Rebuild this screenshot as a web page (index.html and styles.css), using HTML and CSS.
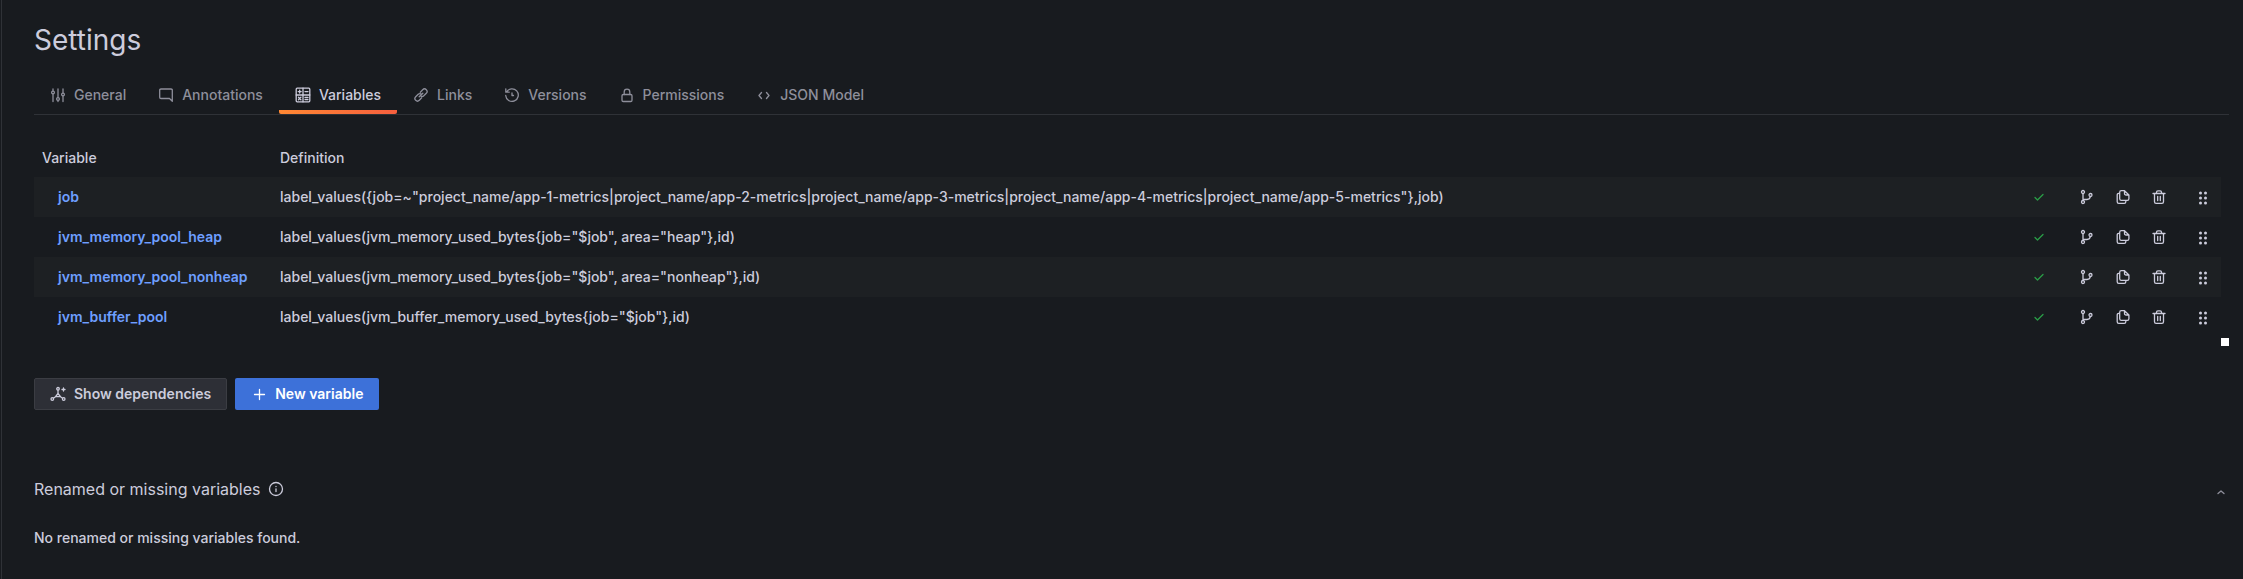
FILE: index.html
```html
<!DOCTYPE html>
<html lang="en">
<head>
    <meta charset="UTF-8">
    <meta name="viewport" content="width=device-width, initial-scale=1.0">
    <title>Settings</title>
    <link rel="stylesheet" href="styles.css">
</head>
<body>
    <!-- shared icons -->
    <svg class="sprite" aria-hidden="true">
        <symbol id="check" viewBox="0 0 16 16"><path d="M4 8.500l2.500 2.500 5.500-5.500"/></symbol>
        <symbol id="branch" viewBox="0 0 16 16">
            <circle cx="4" cy="3" r="1.5"/><circle cx="4" cy="13" r="1.5"/><circle cx="11.5" cy="6" r="1.5"/>
            <path d="M4 4.500v7M4 10.500h4q3 0 3.300-3"/>
        </symbol>
        <symbol id="copy" viewBox="0 0 16 16">
            <path d="M9.500 1.700H6.300q-1.600 0-1.600 1.600v6.400q0 1.600 1.600 1.600h6q1.600 0 1.600-1.600V6zM9.500 1.700v2.700q0 1.600 1.600 1.600h2.800M4.700 4.300H3.800q-1.600 0-1.600 1.600v6.800q0 1.600 1.600 1.600h5.400q1.600 0 1.600-1.600v-1.400"/>
        </symbol>
        <symbol id="trash" viewBox="0 0 16 16">
            <path d="M2 4.500h12M5.500 4.500V3.200q0-1.400 1.400-1.400h2.200q1.400 0 1.400 1.400v1.300M3.500 4.500v8.200q0 1.600 1.600 1.600h5.800q1.600 0 1.600-1.600V4.500M6.700 7.300v4.200M9.300 7.300v4.200"/>
        </symbol>
        <symbol id="drag" viewBox="0 0 16 16">
            <g fill="currentColor" stroke="none">
                <circle cx="5.500" cy="4" r="1.500"/><circle cx="10.500" cy="4" r="1.500"/>
                <circle cx="5.500" cy="9" r="1.500"/><circle cx="10.500" cy="9" r="1.500"/>
                <circle cx="5.500" cy="14" r="1.500"/><circle cx="10.500" cy="14" r="1.500"/>
            </g>
        </symbol>
    </svg>

    <main class="page">
        <h1>Settings</h1>

        <nav class="tabs">
            <a class="tab" href="#general">
                <svg class="icon" viewBox="0 0 16 16"><path d="M3 2v2M3 7v7.500M8 2v8.500M8 13.500v1M13 2v4M13 9v5.500"/><circle cx="3" cy="5.500" r="1.400"/><circle cx="8" cy="12" r="1.400"/><circle cx="13" cy="7.500" r="1.400"/></svg>
                General
            </a>
            <a class="tab" href="#annotations">
                <svg class="icon" viewBox="0 0 16 16"><path d="M14.300 14.300V3.300q0-1.300-1.300-1.300H3q-1.300 0-1.300 1.300v6.900q0 1.300 1.300 1.300h8.500z"/></svg>
                Annotations
            </a>
            <a class="tab active" href="#variables">
                <svg class="icon" viewBox="0 0 16 16"><rect x="1.200" y="1.200" width="13.600" height="13.600" rx="1"/><path d="M8 1.200v13.600M1.200 8h13.600M3.200 4.600h3M4.700 3.100v3M10 4.600h3M3.500 10.300l2.400 2.400M5.900 10.300l-2.400 2.400M10 10.500h3M10 12.600h3"/></svg>
                Variables
            </a>
            <a class="tab" href="#links">
                <svg class="icon" viewBox="0 0 16 16"><path d="M6.200 9.800l3.600-3.600M7.300 5.200l2.400-2.500a2.500 2.500 0 0 1 3.600 3.600L10.800 8.700a2.500 2.500 0 0 1-2.700.5M8.700 10.800l-2.400 2.500a2.500 2.500 0 0 1-3.600-3.600L5.200 7.300a2.500 2.500 0 0 1 2.700-.5"/></svg>
                Links
            </a>
            <a class="tab" href="#versions">
                <svg class="icon" viewBox="0 0 16 16"><path d="M2.500 5A6.300 6.300 0 1 1 1.700 8.500M1.800 1.800v3.400h3.400M8 6v2.500h1.500"/></svg>
                Versions
            </a>
            <a class="tab" href="#permissions">
                <svg class="icon" viewBox="0 0 16 16"><rect x="3" y="7.500" width="10" height="7" rx="1.300"/><path d="M5.200 7.500V5a2.800 2.800 0 0 1 5.600 0v2.500"/></svg>
                Permissions
            </a>
            <a class="tab" href="#json">
                <svg class="icon" viewBox="0 0 16 16"><path d="M5.500 5.500L3 8.500l2.500 3M10.500 5.500L13 8.500l-2.500 3"/></svg>
                JSON Model
            </a>
        </nav>

        <div class="table-wrap">
            <table class="variables">
                <thead>
                    <tr>
                        <th class="col-name">Variable</th>
                        <th>Definition</th>
                        <th class="col-check"></th>
                        <th class="col-actions"></th>
                        <th class="col-drag"></th>
                    </tr>
                </thead>
                <tbody>
                    <tr>
                        <td class="name"><a href="#job">job</a></td>
                        <td>label_values({job=~"project_name/app-1-metrics|project_name/app-2-metrics|project_name/app-3-metrics|project_name/app-4-metrics|project_name/app-5-metrics"},job)</td>
                        <td class="check"><svg class="icon"><use href="#check"/></svg></td>
                        <td>
                            <div class="actions">
                                <button type="button" aria-label="Show usages"><svg class="icon"><use href="#branch"/></svg></button>
                                <button type="button" aria-label="Duplicate variable"><svg class="icon"><use href="#copy"/></svg></button>
                                <button type="button" aria-label="Remove variable"><svg class="icon"><use href="#trash"/></svg></button>
                            </div>
                        </td>
                        <td class="drag"><svg class="icon"><use href="#drag"/></svg></td>
                    </tr>
                    <tr>
                        <td class="name"><a href="#heap">jvm_memory_pool_heap</a></td>
                        <td>label_values(jvm_memory_used_bytes{job="$job", area="heap"},id)</td>
                        <td class="check"><svg class="icon"><use href="#check"/></svg></td>
                        <td>
                            <div class="actions">
                                <button type="button" aria-label="Show usages"><svg class="icon"><use href="#branch"/></svg></button>
                                <button type="button" aria-label="Duplicate variable"><svg class="icon"><use href="#copy"/></svg></button>
                                <button type="button" aria-label="Remove variable"><svg class="icon"><use href="#trash"/></svg></button>
                            </div>
                        </td>
                        <td class="drag"><svg class="icon"><use href="#drag"/></svg></td>
                    </tr>
                    <tr>
                        <td class="name"><a href="#nonheap">jvm_memory_pool_nonheap</a></td>
                        <td>label_values(jvm_memory_used_bytes{job="$job", area="nonheap"},id)</td>
                        <td class="check"><svg class="icon"><use href="#check"/></svg></td>
                        <td>
                            <div class="actions">
                                <button type="button" aria-label="Show usages"><svg class="icon"><use href="#branch"/></svg></button>
                                <button type="button" aria-label="Duplicate variable"><svg class="icon"><use href="#copy"/></svg></button>
                                <button type="button" aria-label="Remove variable"><svg class="icon"><use href="#trash"/></svg></button>
                            </div>
                        </td>
                        <td class="drag"><svg class="icon"><use href="#drag"/></svg></td>
                    </tr>
                    <tr>
                        <td class="name"><a href="#buffer">jvm_buffer_pool</a></td>
                        <td>label_values(jvm_buffer_memory_used_bytes{job="$job"},id)</td>
                        <td class="check"><svg class="icon"><use href="#check"/></svg></td>
                        <td>
                            <div class="actions">
                                <button type="button" aria-label="Show usages"><svg class="icon"><use href="#branch"/></svg></button>
                                <button type="button" aria-label="Duplicate variable"><svg class="icon"><use href="#copy"/></svg></button>
                                <button type="button" aria-label="Remove variable"><svg class="icon"><use href="#trash"/></svg></button>
                            </div>
                        </td>
                        <td class="drag"><svg class="icon"><use href="#drag"/></svg></td>
                    </tr>
                </tbody>
            </table>
            <div class="scroll-corner"></div>
        </div>

        <div class="buttons">
            <button type="button" class="btn btn-secondary">
                <svg class="icon" viewBox="0 0 16 16"><circle cx="8" cy="2.800" r="1.300"/><circle cx="2.300" cy="13" r="1.300"/><circle cx="13.700" cy="13" r="1.300"/><path d="M8 4.100v3.400M3.400 12.200L5.500 10.700M12.600 12.200L10.500 10.700M8 7.500l2.500 3.200h-5zM13.500 2v3M12 3.500h3"/></svg>
                Show dependencies
            </button>
            <button type="button" class="btn btn-primary">
                <svg class="icon" viewBox="0 0 16 16"><path d="M8.500 3.500v10M3.500 8.500h10"/></svg>
                New variable
            </button>
        </div>

        <section class="missing">
            <div class="missing-header">
                <h2>Renamed or missing variables</h2>
                <svg class="icon" viewBox="0 0 16 16"><circle cx="8" cy="8" r="6.500"/><path d="M8 7.800v2.700M8 5.300v.3"/></svg>
                <button type="button" class="collapse" aria-label="Collapse"><svg class="icon" viewBox="0 0 16 16"><path d="M5 12.500l3-2.500 3 2.500"/></svg></button>
            </div>
            <p>No renamed or missing variables found.</p>
        </section>
    </main>
</body>
</html>
```

FILE: styles.css
```css
:root {
    --bg: #181b1f;
    --text: #ccccdc;
    --muted: #8e8f9b;
    --border: #2f3237;
    --link: #6e9fff;
}

* {
    box-sizing: border-box;
}

body {
    margin: 0 0 0 1px;
    min-height: 100vh;
    border-left: 1px solid var(--border);
    background: var(--bg);
    color: var(--text);
    font-family: Inter, sans-serif;
    font-size: 14px;
    font-weight: 500;
    line-height: 22px;
}

a {
    text-decoration: none;
}

button {
    font: inherit;
    color: inherit;
    background: none;
    border: none;
    padding: 0;
    cursor: pointer;
}

.sprite {
    display: none;
}

.icon {
    display: block;
    flex: none;
    width: 16px;
    height: 16px;
    fill: none;
    stroke: currentColor;
    stroke-width: 1.3;
    stroke-linecap: round;
    stroke-linejoin: round;
}

.page {
    padding: 24px 14px 24px 32px;
}

h1 {
    margin: 0 0 23px;
    font-size: 28px;
    font-weight: 400;
    line-height: 32px;
}

.tabs {
    display: flex;
    border-bottom: 1px solid var(--border);
}

.tab {
    display: flex;
    align-items: center;
    gap: 8px;
    height: 35px;
    padding: 0 16px 4px;
    border-radius: 2px;
    color: var(--muted);
}

.tab.active {
    color: var(--text);
    background: linear-gradient(90deg, #ff8833, #f55f3e) bottom / 100% 4px no-repeat;
}

.table-wrap {
    display: flex;
    align-items: flex-end;
    margin-top: 25px;
}

.variables {
    flex: 1;
    table-layout: fixed;
    border-collapse: collapse;
    margin-bottom: 9px;
}

.variables th {
    height: 37px;
    padding: 0 8px 2px;
    text-align: left;
    font-weight: 500;
}

.variables td {
    height: 40px;
    padding: 0 8px;
}

.variables tbody tr:nth-child(odd) {
    background: #1d2023;
}

.col-name {
    width: 238px;
}

.col-check {
    width: 32px;
}

.col-actions {
    width: 132px;
}

.col-drag {
    width: 34px;
}

.variables .name {
    padding-left: 24px;
}

.name a {
    color: var(--link);
    font-weight: 600;
}

.check {
    color: #299c46;
}

.actions {
    display: flex;
    justify-content: flex-end;
    gap: 12px;
    padding-right: 8px;
}

.actions button {
    display: flex;
    justify-content: center;
    width: 24px;
}

.scroll-corner {
    width: 8px;
    height: 8px;
    background: #fff;
}

.buttons {
    display: flex;
    gap: 8px;
    margin-top: 32px;
}

.btn {
    display: flex;
    align-items: center;
    gap: 8px;
    height: 32px;
    padding: 0 16px;
    border-radius: 2px;
    font-weight: 600;
}

.btn-secondary {
    padding: 0 15px;
    border: 1px solid #3b3d43;
    background: #2d2f36;
}

.btn-primary {
    background: #3d71d9;
    color: #fff;
}

.missing {
    margin-top: 68px;
}

.missing-header {
    display: flex;
    align-items: center;
    gap: 8px;
}

h2 {
    margin: 0;
    font-size: 16px;
    font-weight: 400;
    line-height: 22px;
}

.collapse {
    margin-left: auto;
    color: var(--muted);
}

.missing p {
    margin: 27px 0 0;
}
```
